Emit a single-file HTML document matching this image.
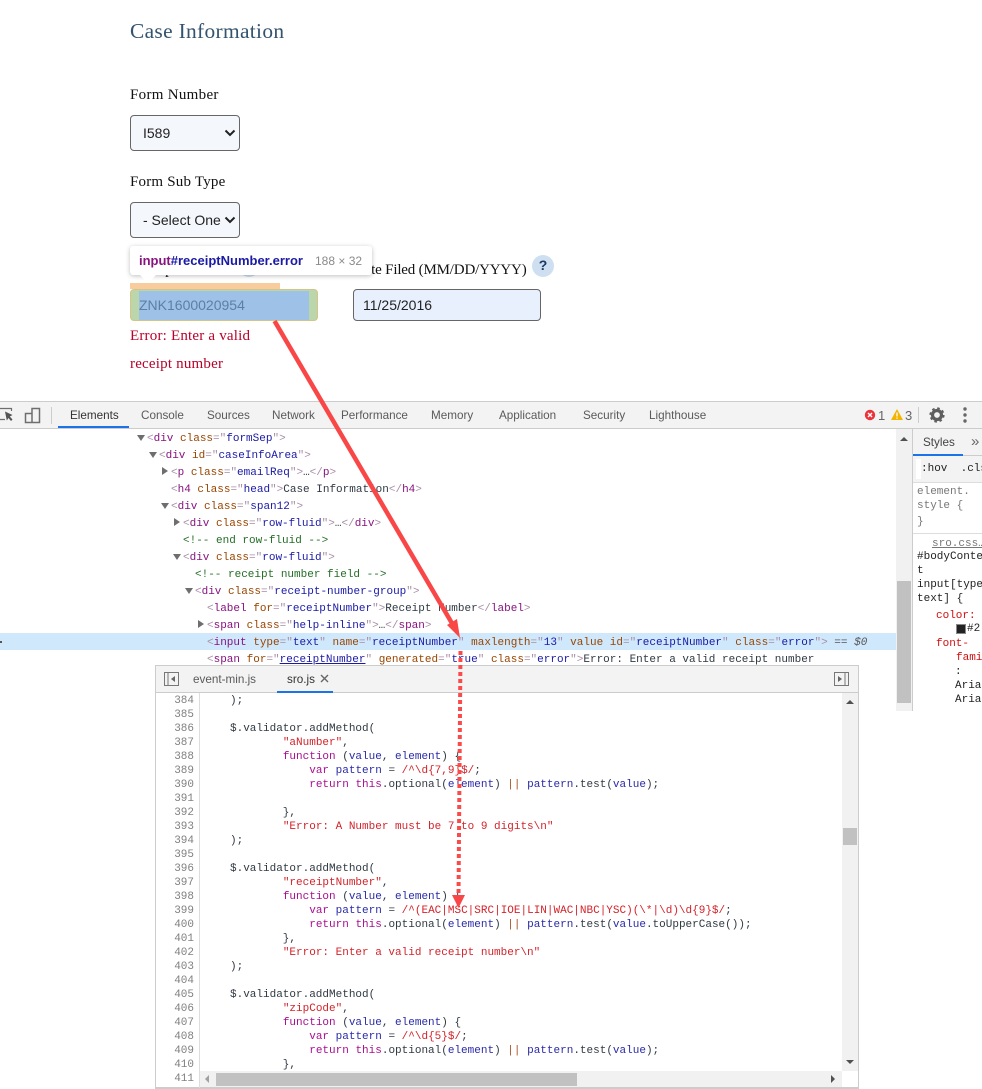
<!DOCTYPE html>
<html><head><meta charset="utf-8"><style>
html,body{margin:0;padding:0;background:#fff}
#p{position:relative;width:982px;height:1089px;overflow:hidden;background:#fff}
#p div,#p span.a{box-sizing:border-box}
.abs{position:absolute}
.sf{font-family:"Liberation Serif",serif;color:#111;position:absolute;white-space:nowrap;font-size:15px;line-height:18px;letter-spacing:.2px}
.sel{position:absolute;left:130px;width:110px;height:36px;background:#f4f7fc;border:1px solid #666;border-radius:4px;font:14px/34px "Liberation Sans",sans-serif;color:#222;padding-left:12px;white-space:nowrap}
.sel svg{position:absolute;left:93px;top:12px}
.tab{position:absolute;top:408px;font:11.7px/16px "Liberation Sans",sans-serif;color:#5a5a5a;white-space:nowrap}
.m{position:absolute;font:11px/17px "Liberation Mono",monospace;white-space:pre;color:#303942}
.b{color:#a88ea6}.t{color:#881280}.n{color:#994500}.v{color:#1a1aa6}.g{color:#236e25}
.tri{position:absolute;width:0;height:0;border-left:4px solid transparent;border-right:4px solid transparent;border-top:6px solid #6e6e6e}
.trr{position:absolute;width:0;height:0;border-top:4px solid transparent;border-bottom:4px solid transparent;border-left:6px solid #6e6e6e}
pre{margin:0;font:11px/14px "Liberation Mono",monospace;color:#303942}
.k{color:#aa0d91}.q{color:#d4232a}.x{color:#2a2aa8}.o{color:#a85423}
</style></head><body><div id="p">

<div class="abs" style="left:130px;top:18px;font:21.4px/26px 'Liberation Serif',serif;color:#33536f;white-space:nowrap;letter-spacing:.33px">Case Information</div>
<div class="sf" style="left:130px;top:86px;letter-spacing:.3px">Form Number</div>
<div class="sel" style="top:115px">I589<svg width="12" height="10" viewBox="0 0 12 10"><path d="M1.500 2.500 6 7l4.500-4.500" fill="none" stroke="#222" stroke-width="2"/></svg></div>
<div class="sf" style="left:130px;top:173px">Form Sub Type</div>
<div class="sel" style="top:202px">- Select One<svg width="12" height="10" viewBox="0 0 12 10"><path d="M1.500 2.500 6 7l4.500-4.500" fill="none" stroke="#222" stroke-width="2"/></svg></div>

<div class="sf" style="left:130px;top:261px">Receipt Number</div>
<div class="abs" style="left:238px;top:255px;width:22px;height:22px;border-radius:50%;background:#cfdff2"></div>
<div class="sf" style="left:354px;top:261px;letter-spacing:-.18px">Date Filed (MM/DD/YYYY)</div>
<div class="abs" style="left:532px;top:255px;width:22px;height:22px;border-radius:50%;background:#cfdff2;color:#1b3a63;font:bold 14px/21px 'Liberation Sans',sans-serif;text-align:center">?</div>

<div class="abs" style="left:130px;top:283px;width:150px;height:6px;background:#f9cc9d"></div>
<div class="abs" style="left:130px;top:289px;width:188px;height:32px;background:#bcd6ac;border:1px solid #d3c587;border-radius:4px"></div>
<div class="abs" style="left:139px;top:291px;width:170px;height:29px;background:#9dc1e7;color:#5d7fa6;font:14px/29px 'Liberation Sans',sans-serif;white-space:nowrap">ZNK1600020954</div>
<div class="abs" style="left:353px;top:289px;width:188px;height:32px;background:#e8f0fe;border:1px solid #666;border-radius:4px;font:14px/31px 'Liberation Sans',sans-serif;color:#222;padding-left:9px">11/25/2016</div>
<div class="sf" style="left:130px;top:327px;color:#b8002a">Error: Enter a valid</div>
<div class="sf" style="left:130px;top:355px;color:#b8002a">receipt number</div>

<div class="abs" style="left:130px;top:246px;width:242px;height:29px;background:#fff;border-radius:3px;box-shadow:0 1px 5px rgba(0,0,0,.25);font:13px/30px 'Liberation Sans',sans-serif;white-space:nowrap;padding-left:9px"><b style="color:#881280">input</b><b style="color:#1a1aa6">#receiptNumber.error</b><span style="position:absolute;left:185px;top:0;color:#8a8a8a;font-size:12px">188 × 32</span></div>
<div class="abs" style="left:140px;top:275px;width:0;height:0;border-left:8px solid transparent;border-right:8px solid transparent;border-top:8px solid #fff"></div>

<!-- devtools -->
<div class="abs" style="left:0;top:401px;width:982px;height:28px;background:#f3f3f3;border-top:1px solid #ccc;border-bottom:1px solid #ccc"></div>
<svg class="abs" style="left:0;top:404px" width="56" height="22" viewBox="0 0 56 22">
<path d="M0 4.500H11.500V7M0 15.500H5" fill="none" stroke="#6e6e6e" stroke-width="1.200"/><path d="M5 7.500 12.500 11 9.800 12.500 12.500 15.500 11 17 8.500 14 6.800 16.500Z" fill="#555"/>
<path d="M32 4.500H39.500V18.500H25.500V9.500H32Z M32 4.500V9.500 M32 9.500V18.500" fill="none" stroke="#6e6e6e" stroke-width="1.500"/>
<path d="M51.500 3V20" stroke="#ccc"/></svg>
<div class="tab" style="left:70px;color:#333">Elements</div>
<div class="abs" style="left:58px;top:426px;width:71px;height:2px;background:#1a73e8"></div>
<div class="tab" style="left:141px">Console</div>
<div class="tab" style="left:207px">Sources</div>
<div class="tab" style="left:272px">Network</div>
<div class="tab" style="left:341px">Performance</div>
<div class="tab" style="left:431px">Memory</div>
<div class="tab" style="left:499px">Application</div>
<div class="tab" style="left:583px">Security</div>
<div class="tab" style="left:649px">Lighthouse</div>
<svg class="abs" style="left:860px;top:404px" width="122" height="24" viewBox="0 0 122 24">
<circle cx="10" cy="11" r="5.200" fill="#e8343a"/><path d="M8 9l4 4M12 9l-4 4" stroke="#fff" stroke-width="1.400"/>
<path d="M37 5 43 16H31Z" fill="#f3b400"/><path d="M37 8.500v4M37 13.500v1.300" stroke="#fff" stroke-width="1.300"/>
<path d="M58.500 3V19" stroke="#ccc"/>
<circle cx="77" cy="11" r="4.500" fill="none" stroke="#5f5f5f" stroke-width="3.200"/><circle cx="77" cy="11" r="6.500" fill="none" stroke="#5f5f5f" stroke-width="2.200" stroke-dasharray="2.550 2.550"/>
<circle cx="105" cy="5" r="1.700" fill="#666"/><circle cx="105" cy="11" r="1.700" fill="#666"/><circle cx="105" cy="17" r="1.700" fill="#666"/></svg>
<div class="tab" style="left:878px;color:#666;font-size:13px">1</div>
<div class="tab" style="left:905px;color:#666;font-size:13px">3</div>

<!-- DOM -->
<div class="abs" style="left:0;top:633px;width:896px;height:17px;background:#cfe8fc"></div>
<div class="abs" style="left:0;top:641px;width:2px;height:2px;background:#555"></div>
<div class="tri" style="left:137px;top:435px"></div>
<div class="tri" style="left:149px;top:452px"></div>
<div class="trr" style="left:162px;top:467px"></div>
<div class="tri" style="left:161px;top:503px"></div>
<div class="trr" style="left:174px;top:518px"></div>
<div class="tri" style="left:173px;top:554px"></div>
<div class="tri" style="left:185px;top:588px"></div>
<div class="trr" style="left:198px;top:620px"></div>
<div class="m" style="left:147px;top:431px"><span class="b">&lt;</span><span class="t">div</span> <span class="n">class</span><span class="b">="</span><span class="v">formSep</span><span class="b">"&gt;</span></div>
<div class="m" style="left:159px;top:448px"><span class="b">&lt;</span><span class="t">div</span> <span class="n">id</span><span class="b">="</span><span class="v">caseInfoArea</span><span class="b">"&gt;</span></div>
<div class="m" style="left:171px;top:465px"><span class="b">&lt;</span><span class="t">p</span> <span class="n">class</span><span class="b">="</span><span class="v">emailReq</span><span class="b">"&gt;</span>…<span class="b">&lt;/</span><span class="t">p</span><span class="b">&gt;</span></div>
<div class="m" style="left:171px;top:482px"><span class="b">&lt;</span><span class="t">h4</span> <span class="n">class</span><span class="b">="</span><span class="v">head</span><span class="b">"&gt;</span>Case Information<span class="b">&lt;/</span><span class="t">h4</span><span class="b">&gt;</span></div>
<div class="m" style="left:171px;top:499px"><span class="b">&lt;</span><span class="t">div</span> <span class="n">class</span><span class="b">="</span><span class="v">span12</span><span class="b">"&gt;</span></div>
<div class="m" style="left:183px;top:516px"><span class="b">&lt;</span><span class="t">div</span> <span class="n">class</span><span class="b">="</span><span class="v">row-fluid</span><span class="b">"&gt;</span>…<span class="b">&lt;/</span><span class="t">div</span><span class="b">&gt;</span></div>
<div class="m g" style="left:183px;top:533px;color:#236e25">&lt;!-- end row-fluid --&gt;</div>
<div class="m" style="left:183px;top:550px"><span class="b">&lt;</span><span class="t">div</span> <span class="n">class</span><span class="b">="</span><span class="v">row-fluid</span><span class="b">"&gt;</span></div>
<div class="m" style="left:195px;top:567px;color:#236e25">&lt;!-- receipt number field --&gt;</div>
<div class="m" style="left:195px;top:584px"><span class="b">&lt;</span><span class="t">div</span> <span class="n">class</span><span class="b">="</span><span class="v">receipt-number-group</span><span class="b">"&gt;</span></div>
<div class="m" style="left:207px;top:601px"><span class="b">&lt;</span><span class="t">label</span> <span class="n">for</span><span class="b">="</span><span class="v">receiptNumber</span><span class="b">"&gt;</span>Receipt Number<span class="b">&lt;/</span><span class="t">label</span><span class="b">&gt;</span></div>
<div class="m" style="left:207px;top:618px"><span class="b">&lt;</span><span class="t">span</span> <span class="n">class</span><span class="b">="</span><span class="v">help-inline</span><span class="b">"&gt;</span>…<span class="b">&lt;/</span><span class="t">span</span><span class="b">&gt;</span></div>
<div class="m" style="left:207px;top:635px"><span class="b">&lt;</span><span class="t">input</span> <span class="n">type</span><span class="b">="</span><span class="v">text</span><span class="b">"</span> <span class="n">name</span><span class="b">="</span><span class="v">receiptNumber</span><span class="b">"</span> <span class="n">maxlength</span><span class="b">="</span><span class="v">13</span><span class="b">"</span> <span class="n">value</span> <span class="n">id</span><span class="b">="</span><span class="v">receiptNumber</span><span class="b">"</span> <span class="n">class</span><span class="b">="</span><span class="v">error</span><span class="b">"&gt;</span> <span style="color:#555">== <i>$0</i></span></div>
<div class="m" style="left:207px;top:652px"><span class="b">&lt;</span><span class="t">span</span> <span class="n">for</span><span class="b">="</span><span class="v" style="text-decoration:underline">receiptNumber</span><span class="b">"</span> <span class="n">generated</span><span class="b">="</span><span class="v">true</span><span class="b">"</span> <span class="n">class</span><span class="b">="</span><span class="v">error</span><span class="b">"&gt;</span>Error: Enter a valid receipt number</div>

<!-- elements scrollbar -->
<div class="abs" style="left:896px;top:429px;width:16px;height:282px;background:#f1f1f1"></div>
<div class="abs" style="left:897px;top:581px;width:14px;height:122px;background:#c1c1c1"></div>
<div class="abs" style="left:900px;top:437px;width:0;height:0;border-left:4px solid transparent;border-right:4px solid transparent;border-bottom:4px solid #505050"></div>
<div class="abs" style="left:912px;top:429px;width:1px;height:282px;background:#ccc"></div>

<!-- styles -->
<div class="abs" style="left:913px;top:429px;width:69px;height:27px;background:#f3f3f3;border-bottom:1px solid #ccc"></div>
<div class="abs" style="left:913px;top:454px;width:50px;height:2px;background:#1a73e8"></div>
<div class="tab" style="left:923px;top:435px;color:#444">Styles</div>
<div class="abs" style="left:971px;top:433px;font:15px/18px 'Liberation Sans',sans-serif;color:#666">»</div>
<div class="abs" style="left:913px;top:456px;width:69px;height:27px;background:#f3f3f3;border-bottom:1px solid #ddd"></div>
<div class="abs" style="left:916px;top:459px;width:5px;height:20px;background:#fff"></div>
<div class="m" style="left:921px;top:461px;color:#222">:hov  .cls</div>
<div class="m" style="left:917px;top:485px;color:#777;line-height:14px">element.
style {</div>
<div class="m" style="left:917px;top:515px;color:#777;line-height:14px">}</div>
<div class="abs" style="left:913px;top:533px;width:69px;height:1px;background:#ddd"></div>
<div class="m" style="left:932px;top:536px;color:#777;line-height:16px;text-decoration:underline">sro.css…</div>
<div class="m" style="left:917px;top:550px;line-height:14px;color:#222">#bodyConte
t
input[type
text] {</div>
<div class="m" style="left:936px;top:609px;line-height:14px;color:#d01010">color:</div>
<div class="abs" style="left:956px;top:624px;width:10px;height:10px;background:#222;border:1px solid #888"></div>
<div class="m" style="left:967px;top:622px;line-height:14px;color:#222">#2</div>
<div class="m" style="left:936px;top:637px;line-height:14px;color:#d01010">font-</div>
<div class="m" style="left:956px;top:651px;line-height:14px;color:#d01010">fami</div>
<div class="m" style="left:955px;top:665px;line-height:14px;color:#222">:
Aria
Aria</div>

<!-- source panel -->
<div class="abs" style="left:155px;top:665px;width:704px;height:424px;background:#fff;border:1px solid #ccc;border-bottom:2px solid #ccc;border-right:1px solid #ccc"></div>
<div class="abs" style="left:156px;top:666px;width:702px;height:27px;background:#f3f3f3;border-bottom:1px solid #ccc"></div>
<svg class="abs" style="left:164px;top:672px" width="16" height="14" viewBox="0 0 16 14"><path d="M.5.500H14.500V13.500H.5ZM4 .5V13.500" fill="none" stroke="#777"/><path d="M11 4V10L7 7Z" fill="#666"/></svg>
<svg class="abs" style="left:834px;top:672px" width="16" height="14" viewBox="0 0 16 14"><path d="M.5.500H14.500V13.500H.5ZM11 .5V13.500" fill="none" stroke="#777"/><path d="M4 4V10L8 7Z" fill="#666"/></svg>
<div class="tab" style="left:193px;top:672px">event-min.js</div>
<div class="tab" style="left:287px;top:672px;color:#333">sro.js</div>
<svg class="abs" style="left:320px;top:674px" width="9" height="9" viewBox="0 0 9 9"><path d="M1 1l7 7M8 1 1 8" stroke="#666" stroke-width="1.400"/></svg>
<div class="abs" style="left:277px;top:691px;width:56px;height:2px;background:#1a73e8"></div>
<div class="abs" style="left:199px;top:693px;width:1px;height:395px;background:#ddd"></div>

<pre class="abs" style="left:160px;top:694px;width:34px;text-align:right;color:#808080">384
385
386
387
388
389
390
391
392
393
394
395
396
397
398
399
400
401
402
403
404
405
406
407
408
409
410
411</pre>
<pre class="abs" style="left:203.6px;top:694px">    );

    $.validator.addMethod(
            <span class="q">"aNumber"</span>,
            <span class="k">function</span> (<span class="x">value</span>, <span class="x">element</span>) {
                <span class="k">var</span> <span class="x">pattern</span> = <span class="q">/^\d{7,9}$/</span>;
                <span class="k">return</span> <span class="k">this</span>.optional(<span class="x">element</span>) <span class="o">||</span> <span class="x">pattern</span>.test(<span class="x">value</span>);

            },
            <span class="q">"Error: A Number must be 7 to 9 digits\n"</span>
    );

    $.validator.addMethod(
            <span class="q">"receiptNumber"</span>,
            <span class="k">function</span> (<span class="x">value</span>, <span class="x">element</span>) {
                <span class="k">var</span> <span class="x">pattern</span> = <span class="q">/^(EAC|MSC|SRC|IOE|LIN|WAC|NBC|YSC)(\*|\d)\d{9}$/</span>;
                <span class="k">return</span> <span class="k">this</span>.optional(<span class="x">element</span>) <span class="o">||</span> <span class="x">pattern</span>.test(<span class="x">value</span>.toUpperCase());
            },
            <span class="q">"Error: Enter a valid receipt number\n"</span>
    );

    $.validator.addMethod(
            <span class="q">"zipCode"</span>,
            <span class="k">function</span> (<span class="x">value</span>, <span class="x">element</span>) {
                <span class="k">var</span> <span class="x">pattern</span> = <span class="q">/^\d{5}$/</span>;
                <span class="k">return</span> <span class="k">this</span>.optional(<span class="x">element</span>) <span class="o">||</span> <span class="x">pattern</span>.test(<span class="x">value</span>);
            },</pre>

<!-- source scrollbars -->
<div class="abs" style="left:842px;top:693px;width:16px;height:378px;background:#f1f1f1"></div>
<div class="abs" style="left:843px;top:828px;width:14px;height:17px;background:#c1c1c1"></div>
<div class="abs" style="left:846px;top:700px;width:0;height:0;border-left:4px solid transparent;border-right:4px solid transparent;border-bottom:4px solid #505050"></div>
<div class="abs" style="left:846px;top:1060px;width:0;height:0;border-left:4px solid transparent;border-right:4px solid transparent;border-top:4px solid #505050"></div>
<div class="abs" style="left:200px;top:1071px;width:642px;height:16px;background:#f1f1f1"></div>
<div class="abs" style="left:216px;top:1073px;width:361px;height:13px;background:#c1c1c1"></div>
<div class="abs" style="left:205px;top:1075px;width:0;height:0;border-top:4px solid transparent;border-bottom:4px solid transparent;border-right:4px solid #a0a0a0"></div>
<div class="abs" style="left:831px;top:1075px;width:0;height:0;border-top:4px solid transparent;border-bottom:4px solid transparent;border-left:4px solid #505050"></div>

<!-- arrows -->
<svg class="abs" style="left:0;top:0" width="982" height="1089" viewBox="0 0 982 1089">
<path d="M274.500 321 453 625" stroke="#f94747" stroke-width="4.500" fill="none"/>
<path d="M460 638 447 625 457 619Z" fill="#f94747"/>
<path d="M460.500 651 458.500 896" stroke="#fb4a4a" stroke-width="4" stroke-dasharray="4 3" fill="none"/>
<path d="M452 895H465L458.500 908Z" fill="#f94747"/>
</svg>
</div></body></html>
